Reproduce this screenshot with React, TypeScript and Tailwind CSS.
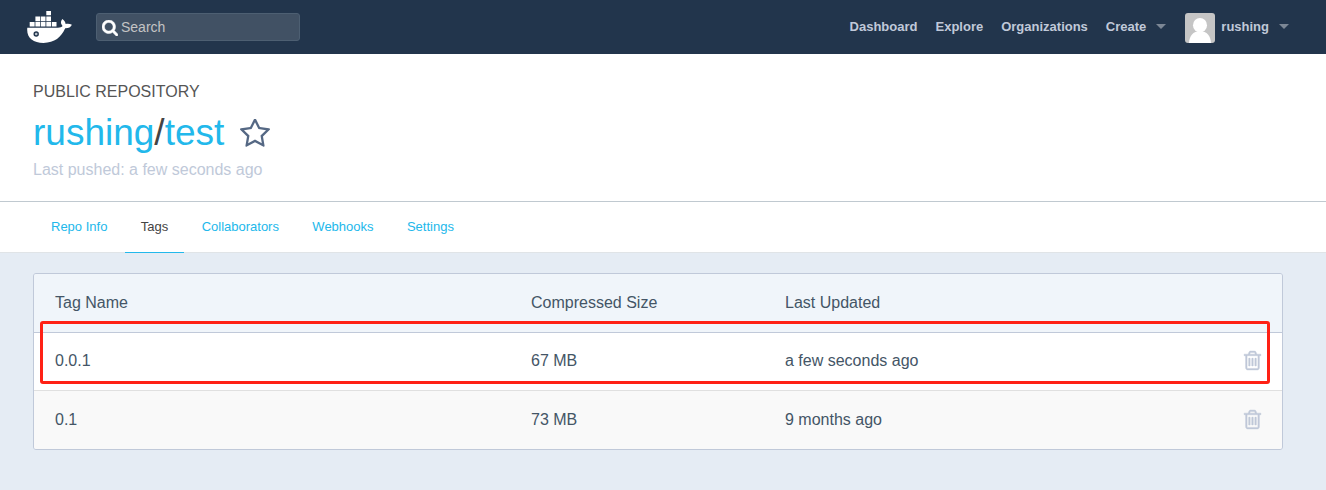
const tabs = ["Repo Info", "Tags", "Collaborators", "Webhooks", "Settings"];
const rows = [
  { tag: "0.0.1", size: "67 MB", updated: "a few seconds ago" },
  { tag: "0.1", size: "73 MB", updated: "9 months ago" },
];

function DockerLogo() {
  return (
    <svg width="45" height="32" viewBox="0 0 45 32" fill="#fff" className="shrink-0">
      <path d="M19.300 0h4.700v4.300h-4.700z M8.400 5.500h4.700v4.700H8.400z M13.800 5.500h4.700v4.700h-4.700z M19.300 5.500h4.700v4.700h-4.700z M2.700 11.100h4.900v4.300H2.700z M8.400 11.100h4.700v4.300H8.400z M13.800 11.100h4.700v4.300h-4.700z M19.300 11.100h4.700v4.300h-4.700z M24.800 11.100h4.700v4.300h-4.700z" />
      <path
        fillRule="evenodd"
        d="M.3 16.700H31c2.200-.1 3.600-.6 4.600-1.700-2.100-2.200-2.200-4.700-.3-7.100 2.300 1.600 3.200 3.200 3.300 5.100 2.200-.6 4.500-.3 6.300.8-1.200 2.600-3.400 3.600-6.700 3.500C34.200 26.300 27.600 31.900 16.500 31.900 5.800 31.900-.8 26.500.3 16.700zM9.200 20.300a2.700 2.700 0 1 0 0 5.400 2.700 2.700 0 0 0 0-5.400z"
      />
      <circle cx="9.200" cy="23" r="1.300" fill="#b8c0ca" />
    </svg>
  );
}

function SearchIcon() {
  return (
    <svg
      width="16"
      height="16"
      viewBox="64 128 1664 1664"
      fill="#fff"
      stroke="#fff"
      strokeWidth="50"
      className="mt-[2px] shrink-0"
    >
      <path d="M1216 832q0-185-131.5-316.5t-316.5-131.5-316.5 131.5-131.5 316.5 131.5 316.5 316.5 131.5 316.5-131.5 131.5-316.5zm512 832q0 52-38 90t-90 38q-54 0-90-38l-343-342q-179 124-399 124-143 0-273.5-55.5t-225-150-150-225-55.5-273.5 55.5-273.5 150-225 225-150 273.5-55.5 273.5 55.5 225 150 150 225 55.5 273.5q0 220-124 399l343 343q37 37 37 90z" />
    </svg>
  );
}

function StarIcon() {
  return (
    <svg width="30" height="29" viewBox="0 160 1664 1459" fill="#556884" className="mt-px ml-4">
      <path d="M1137 1004l306-297-422-62-189-382-189 382-422 62 306 297-73 421 378-199 377 199zm527-357q0 22-26 48l-363 354 86 500q1 7 1 20 0 50-41 50-19 0-40-12l-449-236-449 236q-22 12-40 12-21 0-31.5-14.5t-10.5-35.500q0-6 2-20l86-500-364-354q-25-27-25-48 0-37 56-46l502-73 225-455q19-41 49-41t49 41l225 455 502 73q56 9 56 46z" />
    </svg>
  );
}

function TrashIcon() {
  return (
    <svg
      width="17"
      height="19"
      viewBox="192 128 1408 1536"
      preserveAspectRatio="none"
      fill="#c0c9d9"
      stroke="#c0c9d9"
      strokeWidth="32"
      className="mb-px overflow-visible"
    >
      <path d="M704 736v576q0 14-9 23t-23 9h-64q-14 0-23-9t-9-23v-576q0-14 9-23t23-9h64q14 0 23 9t9 23zm256 0v576q0 14-9 23t-23 9h-64q-14 0-23-9t-9-23v-576q0-14 9-23t23-9h64q14 0 23 9t9 23zm256 0v576q0 14-9 23t-23 9h-64q-14 0-23-9t-9-23v-576q0-14 9-23t23-9h64q14 0 23 9t9 23zm128 724v-948h-896v948q0 22 7 40.500t14.500 27 10.500 8.500h832q3 0 10.500-8.500t14.500-27 7-40.500zm-672-1076h448l-48-117q-7-9-17-11h-317q-10 2-17 11zm928 32v64q0 14-9 23t-23 9h-96v948q0 83-47 143.500t-113 60.500h-832q-66 0-113-58.500t-47-141.500v-952h-96q-14 0-23-9t-9-23v-64q0-14 9-23t23-9h309l70-167q15-37 54-63t79-26h320q40 0 79 26t54 63l70 167h309q14 0 23 9t9 23z" />
    </svg>
  );
}

function Caret() {
  return (
    <svg width="10" height="5" viewBox="0 0 10 5" fill="#7c8795" className="mb-[2px] shrink-0">
      <path d="M0 0h10L5 5z" />
    </svg>
  );
}

function Avatar() {
  return (
    <svg width="30" height="30" viewBox="0 0 30 30" className="mt-[2px] ml-[19px] shrink-0 rounded-[3px]">
      <rect width="30" height="30" fill="#c5c5c5" />
      <ellipse cx="15" cy="12.200" rx="7" ry="7.200" fill="#fff" />
      <path d="M4 30c.3-7 4-12 11-12s10.700 5 11 12z" fill="#fff" />
    </svg>
  );
}

export default function App() {
  return (
    <div className="flex h-[490px] flex-col bg-[#e5ecf4] font-['Liberation_Sans',Arial,sans-serif] text-[#445566]">
      <header className="flex h-[54px] items-center bg-[#22354c] pl-[27px] text-[13px] font-bold text-[#c0c9d9]">
        <DockerLogo />
        <div className="ml-6 flex h-7 w-[204px] items-center gap-1 rounded-[3px] border border-[#4d5f72] bg-[#415164] pl-[5px] text-[14px] font-normal text-[#c4c4c4]">
          <SearchIcon />
          <span className="-ml-px pt-px">Search</span>
        </div>
        <nav className="ml-auto flex items-center pr-[37px]">
          <span>Dashboard</span>
          <span className="ml-[18px]">Explore</span>
          <span className="mr-[10px] ml-[18px]">Organizations</span>
          <span className="mr-[10px] ml-2">Create</span>
          <Caret />
          <Avatar />
          <span className="mr-[10px] ml-1.5">rushing</span>
          <Caret />
        </nav>
      </header>
      <section className="h-[148px] border-b border-[#c0c9d0] bg-white pl-[33px]">
        <div className="pt-7 text-base leading-5 text-[#555]">PUBLIC REPOSITORY</div>
        <h1 className="mt-2 flex h-[46px] items-center text-[37px] leading-[46px] text-[#22b8eb]">
          <span>
            rushing<span className="text-[#444]">/</span>test
          </span>
          <StarIcon />
        </h1>
        <div className="mt-1 text-base leading-5 text-[#c0c9d9]">Last pushed: a few seconds ago</div>
      </section>
      <nav className="flex h-[51px] gap-[1.4px] border-b border-[#e0e4e7] bg-white pl-[35px] text-[13px] leading-[49px] text-[#22b8eb]">
        {tabs.map((tab) => (
          <span
            key={tab}
            className={tab === "Tags" ? "h-[51px] border-b border-[#22b8eb] px-4" : "h-[50px] px-4"}
          >
            <span className={tab === "Tags" ? "text-[#444]" : ""}>{tab}</span>
          </span>
        ))}
      </nav>
      <main className="relative pt-5 pr-[43px] pl-[33px]">
        <div className="overflow-hidden rounded-[3px] border border-[#c0c9d9] text-base">
          <div className="flex h-[59px] items-center border-b border-[#c0c9d9] bg-[#f0f5fa] pl-[21px]">
            <span className="w-[476px]">Tag Name</span>
            <span className="w-[254px]">Compressed Size</span>
            <span>Last Updated</span>
          </div>
          {rows.map((row) => (
            <div
              key={row.tag}
              className="flex h-[58px] items-center border-b border-[#e0e0e0] bg-white pr-[21px] pb-px pl-[21px] last:border-0 last:bg-[#f9f9f9] last:pb-0"
            >
              <span className="w-[476px]">{row.tag}</span>
              <span className="w-[254px]">{row.size}</span>
              <span className="grow">{row.updated}</span>
              <TrashIcon />
            </div>
          ))}
        </div>
        <div className="absolute top-[68px] left-10 h-[63px] w-[1230px] rounded-[3px] border-3 border-[#ff2115]" />
      </main>
    </div>
  );
}
